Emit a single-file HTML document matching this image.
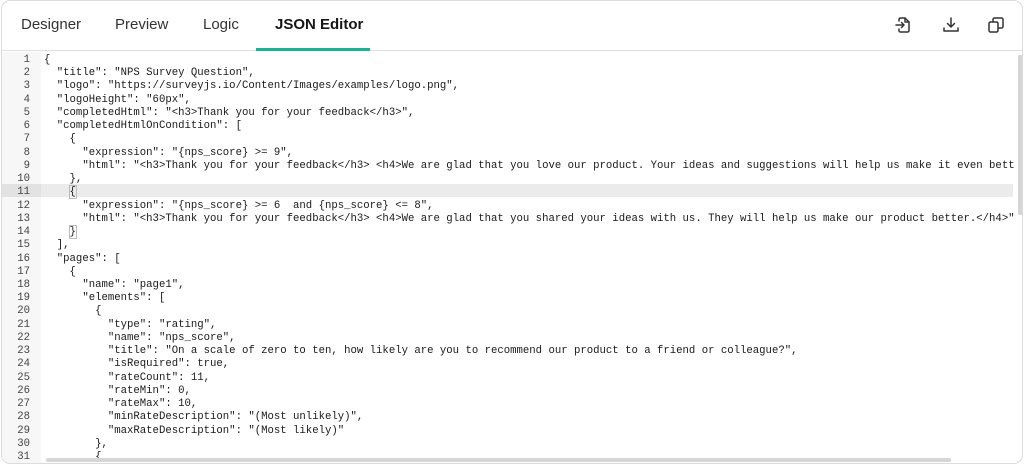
<!DOCTYPE html>
<html><head><meta charset="utf-8"><style>
*{margin:0;padding:0;box-sizing:border-box}
body{width:1024px;height:464px;background:#fff;overflow:hidden;font-family:"Liberation Sans",sans-serif}
.frame{position:absolute;left:1px;top:0;width:1022px;height:464px;border:1px solid #dcdcdc;border-radius:9px;overflow:hidden;background:#fff}
.tabs{position:absolute;left:0;top:0;width:100%;height:50px;border-bottom:1px solid #e0e0e0}
.tab{position:absolute;top:15px;font-size:15px;color:#333}
.active{font-weight:bold;color:#161616}
.ul{position:absolute;left:254px;top:47px;width:114px;height:3px;background:#19b394}
.gut{position:absolute;left:0;top:51px;width:39px;height:413px;background:#f7f7f7}
.hl{position:absolute;left:0;top:183px;width:1011px;height:13px;background:#ebebeb}
.hlg{position:absolute;left:0;top:183px;width:39px;height:13px;background:#e2e2e2}
pre{position:absolute;top:53px;font-family:"Liberation Mono",monospace;font-size:10.65px;line-height:13.23px;color:#1a1a1a}
.nums{left:0;width:28px;text-align:right;color:#444}
.code{left:42px}
.bm{outline:1px solid #bbb}
.vs{position:absolute;left:1016px;top:54px;width:5px;height:160px;background:#d6d6d6;border-radius:2px}
.hs{position:absolute;left:44px;top:457px;width:905px;height:4px;background:#d6d6d6;border-radius:2px}
svg{position:absolute;top:15px}
</style></head><body>
<div class="frame">
<div class="tabs">
<span class="tab" style="left:19px">Designer</span>
<span class="tab" style="left:113px">Preview</span>
<span class="tab" style="left:201px">Logic</span>
<span class="tab active" style="left:273px">JSON Editor</span>
<div class="ul"></div>
<svg style="left:892px" width="18" height="18" viewBox="0 0 18 18" fill="none" stroke="#333" stroke-width="1.5" stroke-linecap="round" stroke-linejoin="round"><path d="M5 5V3.5C5 2.7 5.7 2 6.5 2H11L15 6V14.5C15 15.3 14.3 16 13.5 16H6.5C5.7 16 5 15.3 5 14.5V13"/><path d="M11 2V6H15"/><path d="M2 9H10M7.5 6.5L10 9L7.5 11.5"/></svg>
<svg style="left:940px" width="18" height="18" viewBox="0 0 18 18" fill="none" stroke="#333" stroke-width="1.5" stroke-linecap="round" stroke-linejoin="round"><path d="M9 2V11M5.5 7.5L9 11L12.5 7.5"/><path d="M2 12V15H16V12"/></svg>
<svg style="left:985px" width="18" height="18" viewBox="0 0 18 18" fill="none" stroke="#333" stroke-width="1.5" stroke-linejoin="round"><rect x="2" y="6" width="9" height="10" rx="1.5"/><path d="M6 6V3.5C6 2.7 6.7 2 7.5 2H14.5C15.3 2 16 2.7 16 3.5V10.5C16 11.3 15.3 12 14.5 12H11"/></svg>
</div>
<div class="gut"></div>
<div class="hl"></div><div class="hlg"></div>
<pre class="nums">1
2
3
4
5
6
7
8
9
10
11
12
13
14
15
16
17
18
19
20
21
22
23
24
25
26
27
28
29
30
31</pre>
<pre class="code">{
  "title": "NPS Survey Question",
  "logo": "https://surveyjs.io/Content/Images/examples/logo.png",
  "logoHeight": "60px",
  "completedHtml": "&lt;h3&gt;Thank you for your feedback&lt;/h3&gt;",
  "completedHtmlOnCondition": [
    {
      "expression": "{nps_score} &gt;= 9",
      "html": "&lt;h3&gt;Thank you for your feedback&lt;/h3&gt; &lt;h4&gt;We are glad that you love our product. Your ideas and suggestions will help us make it even bett
    },
    <span class="bm">{</span>
      "expression": "{nps_score} &gt;= 6  and {nps_score} &lt;= 8",
      "html": "&lt;h3&gt;Thank you for your feedback&lt;/h3&gt; &lt;h4&gt;We are glad that you shared your ideas with us. They will help us make our product better.&lt;/h4&gt;"
    <span class="bm">}</span>
  ],
  "pages": [
    {
      "name": "page1",
      "elements": [
        {
          "type": "rating",
          "name": "nps_score",
          "title": "On a scale of zero to ten, how likely are you to recommend our product to a friend or colleague?",
          "isRequired": true,
          "rateCount": 11,
          "rateMin": 0,
          "rateMax": 10,
          "minRateDescription": "(Most unlikely)",
          "maxRateDescription": "(Most likely)"
        },
        {</pre>
<div class="vs"></div>
<div class="hs"></div>
</div>
</body></html>
